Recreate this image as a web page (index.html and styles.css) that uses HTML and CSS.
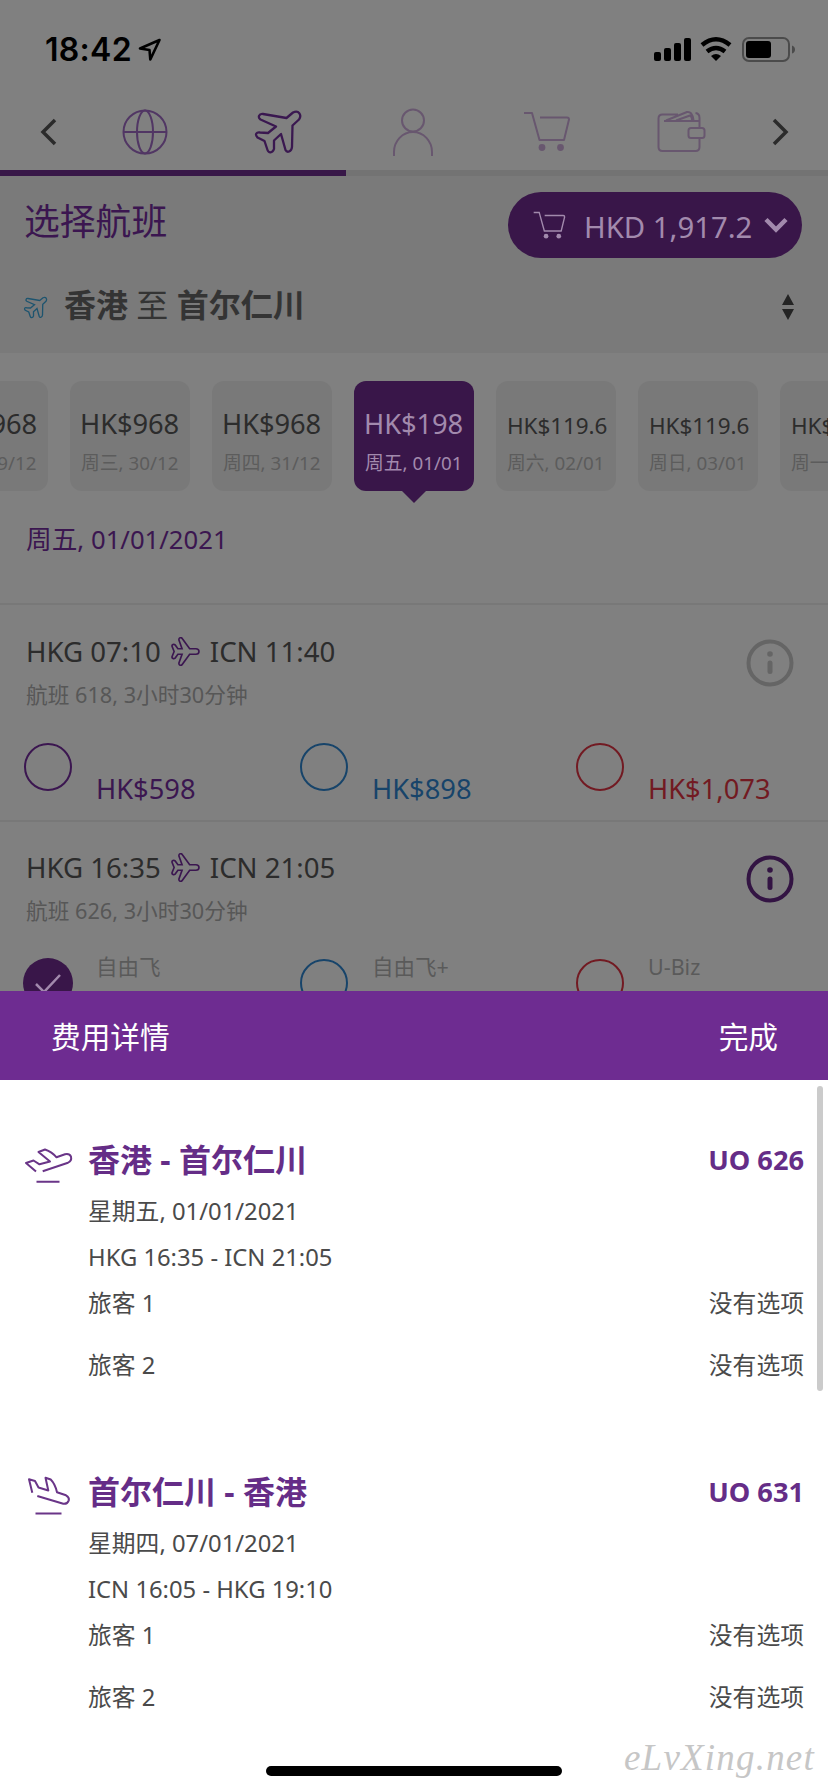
FILE: index.html
```html
<!DOCTYPE html>
<html lang="zh-CN">
<head>
<meta charset="utf-8">
<title>选择航班</title>
<link rel="stylesheet" href="styles.css">
</head>
<body>
<svg class="defs" width="0" height="0">
  <symbol id="plane" viewBox="2 3 42 42"><path d="M42.500 24c0-2.500-2-4-4.500-4H29L18.500 5.500C17 3 13 3.500 13.500 7.500L18 20h-6L8 14.500c-2-1.500-5-.5-4.500 2L6.500 24 3.500 31.500c-.5 2.500 2.500 3.500 4.500 2l4-5.500h6l-4.500 12.500c-.5 4 3.500 4.500 5 2L29 28h9c2.500 0 4.500-1.500 4.500-4z"/></symbol>
  <symbol id="cart" viewBox="0 0 48 42"><path d="M1 2h8l7.500 27H41l5-20.500Q46 6.500 44 6.500H17"/><circle class="dot" cx="19" cy="36.500" r="3.400"/><circle class="dot" cx="37.500" cy="36.500" r="3.400"/></symbol>
  <symbol id="info" viewBox="0 0 48 48"><circle cx="24" cy="24" r="21.500"/><circle class="dot" cx="24" cy="15" r="2.800"/><path class="stem" d="M24 24v8.500"/></symbol>
</svg>
<main class="page">
  <header class="status">
    <span class="clock">18:42</span>
    <svg class="loc" width="24" height="24" viewBox="0 0 24 24"><path d="M21.500 2 2 10.500l9.500 1.500.8 9.500z"/></svg>
    <svg class="signals" width="144" height="28" viewBox="0 0 144 28">
      <rect x="1" y="16" width="7" height="9" rx="2"/><rect x="11" y="12" width="7" height="13" rx="2"/><rect x="21" y="7" width="7" height="18" rx="2"/><rect x="31" y="2" width="7" height="23" rx="2"/>
      <path class="wifi" d="M49 9q14-11.500 28 0M54 15.500q9-7 18 0"/><path d="M58 20q5-4 10 0l-5 5z"/>
      <rect class="shell" x="90" y="2" width="46" height="23" rx="6"/><rect x="93" y="5" width="25" height="17" rx="3"/><path class="nub" d="M139 9.500q3 1 3 4t-3 4z"/>
    </svg>
  </header>
  <nav class="steps">
    <svg class="chev left" width="20" height="30" viewBox="0 0 20 30"><path d="M17 3 5 15l12 12"/></svg>
    <svg class="step globe" width="48" height="48" viewBox="0 0 48 48"><circle cx="24" cy="24" r="21.500"/><ellipse cx="24" cy="24" rx="8" ry="21.500"/><path d="M2.500 24h43"/></svg>
    <svg class="step active" width="50" height="50" viewBox="0 0 50 50"><path d="M32.500 11 39 5.500c6-3 9 3 6 7L38.500 18.500 38 40c-.5 5-5 6-6.500 3L27 27l-7 6.500V42c-1.500 4.500-5.500 4-6.500 1L10.500 34 3.500 30.500C.5 27 2.500 25 6 25.500l8 .5 8-6.500L6.500 12.500C3.500 10.500 5 6.500 9 7z"/></svg>
    <svg class="step faint" width="48" height="50" viewBox="0 0 48 50"><circle cx="24" cy="13.500" r="11"/><path d="M5 49V45a19 20 0 0 1 38 0v4"/></svg>
    <svg class="step faint" width="48" height="42"><use href="#cart"/></svg>
    <svg class="step faint" width="50" height="46" viewBox="0 0 50 46"><path d="M43.500 18V9q0-4.500-4-5M43.500 28v10q0 4-4 4H6.500Q2.500 42 2.500 38V9.500q0-4 4-4H22M8 12h35M10 11.500 31 3q5-1 6.500 8M20 11.500 34 6.500q2.500 2 2 5"/><rect x="32.500" y="19" width="16" height="10" rx="2.500"/></svg>
    <svg class="chev right" width="20" height="30" viewBox="0 0 20 30"><path d="M3 3l12 12L3 27"/></svg>
  </nav>
  <div class="progress"><div class="done"></div></div>
  <section class="head">
    <div class="headrow">
      <h1>选择航班</h1>
      <div class="pill">
        <svg class="pillcart" width="33" height="29"><use href="#cart"/></svg>
        <span>HKD 1,917.2</span>
        <svg class="pillchev" width="24" height="18" viewBox="0 0 24 18"><path d="M2 3.500 12 13.500l10-10"/></svg>
      </div>
    </div>
    <div class="route">
      <svg class="routeplane" width="26" height="25" viewBox="0 0 50 50"><path d="M32.500 11 39 5.500c6-3 9 3 6 7L38.500 18.500 38 40c-.5 5-5 6-6.500 3L27 27l-7 6.500V42c-1.500 4.500-5.500 4-6.500 1L10.500 34 3.500 30.500C.5 27 2.500 25 6 25.500l8 .5 8-6.500L6.500 12.500C3.500 10.500 5 6.500 9 7z"/></svg>
      <div class="cities"><b>香港</b> 至 <b>首尔仁川</b></div>
      <svg class="sort" width="12" height="26" viewBox="0 0 12 26"><path d="M6 0l6 11H0zM6 26 0 15h12z"/></svg>
    </div>
  </section>
  <div class="dates">
    <div class="card"><b>HK$968</b><span>周二, 29/12</span></div>
    <div class="card"><b>HK$968</b><span>周三, 30/12</span></div>
    <div class="card"><b>HK$968</b><span>周四, 31/12</span></div>
    <div class="card on"><b>HK$198</b><span>周五, 01/01</span></div>
    <div class="card small"><b>HK$119.6</b><span>周六, 02/01</span></div>
    <div class="card small"><b>HK$119.6</b><span>周日, 03/01</span></div>
    <div class="card small"><b>HK$119.6</b><span>周一, 04/01</span></div>
  </div>
  <h2 class="day">周五, 01/01/2021</h2>
  <article class="flight">
    <div class="ftop">
      <div>
        <div class="times"><span>HKG 07:10</span><svg width="29" height="29"><use href="#plane"/></svg><span>ICN 11:40</span></div>
        <div class="meta">航班 618, 3小时30分钟</div>
      </div>
      <svg class="info" width="48" height="48"><use href="#info"/></svg>
    </div>
    <div class="fares">
      <div class="fare purple"><i></i><div><span></span><b>HK$598</b></div></div>
      <div class="fare blue"><i></i><div><span></span><b>HK$898</b></div></div>
      <div class="fare red"><i></i><div><span></span><b>HK$1,073</b></div></div>
    </div>
  </article>
  <article class="flight">
    <div class="ftop">
      <div>
        <div class="times"><span>HKG 16:35</span><svg width="29" height="29"><use href="#plane"/></svg><span>ICN 21:05</span></div>
        <div class="meta">航班 626, 3小时30分钟</div>
      </div>
      <svg class="info live" width="48" height="48"><use href="#info"/></svg>
    </div>
    <div class="fares">
      <div class="fare purple picked"><i><svg width="50" height="50" viewBox="0 0 50 50"><path d="M13 26l8 8 16-17"/></svg></i><div><span>自由飞</span></div></div>
      <div class="fare blue"><i></i><div><span>自由飞+</span></div></div>
      <div class="fare red"><i></i><div><span>U-Biz</span></div></div>
    </div>
  </article>
</main>
<section class="sheet">
  <header class="bar"><span>费用详情</span><span>完成</span></header>
  <div class="body">
    <div class="leg">
      <svg class="legicon" width="47" height="40" viewBox="0 0 47 40"><path d="M11 26.500 1 18l7.500-2.500 6 3.800L25 16.500 13.500 7l6.500-2.500Q27 7 31.500 12.300L40 9.300q4.500-1 6 2.400 1 4-3 6L17.700 26.300M11.500 36.700h23"/></svg>
      <div class="lines">
        <div class="row title"><span>香港 - 首尔仁川</span><span>UO 626</span></div>
        <div class="row">星期五, 01/01/2021</div>
        <div class="row">HKG 16:35 - ICN 21:05</div>
        <div class="row"><span>旅客 1</span><span>没有选项</span></div>
        <div class="row second"><span>旅客 2</span><span>没有选项</span></div>
      </div>
    </div>
    <div class="leg">
      <svg class="legicon" width="47" height="40" viewBox="0 0 47 40"><path d="M7.300 15.800 4 2.300l6 1.700 3.500 6.500 9.800 3L20.500.7l5.200 1.800q4.500 4.500 6.300 12.800l9 3q3.500 2 2.800 5-1.500 4-5.500 3.500L12.300 19M10.500 36.500h26"/></svg>
      <div class="lines">
        <div class="row title"><span>首尔仁川 - 香港</span><span>UO 631</span></div>
        <div class="row">星期四, 07/01/2021</div>
        <div class="row">ICN 16:05 - HKG 19:10</div>
        <div class="row"><span>旅客 1</span><span>没有选项</span></div>
        <div class="row second"><span>旅客 2</span><span>没有选项</span></div>
      </div>
    </div>
  </div>
  <div class="scroll"></div>
  <div class="home"></div>
  <div class="mark">eLvXing.net</div>
</section>
</body>
</html>
```
FILE: styles.css
```css
* { box-sizing: border-box; }
body { margin: 0; width: 828px; height: 1792px; overflow: hidden; background: #fff; font-family: "Noto Sans", "Noto Sans CJK SC", sans-serif; }
h1, h2 { margin: 0; font-weight: 400; }
b, i { font-weight: 400; font-style: normal; }
svg { display: block; flex: none; fill: none; overflow: visible; }
.defs { position: absolute; }
.page { height: 991px; overflow: hidden; background: #808080; color: #2c2c2c; }

.status { height: 98px; padding: 2px 31px 0 45px; display: flex; align-items: center; }
.clock { font: 600 32px/40px Inter, sans-serif; color: #000; width: 93px; letter-spacing: .3px; }
.loc { stroke: #000; stroke-width: 2.6; stroke-linejoin: round; }
.signals { margin-left: auto; fill: #000; }
.wifi { fill: none; stroke: #000; stroke-width: 4.5; }
.shell { fill: none; stroke: #4b4b4b; stroke-width: 2; }
.nub { fill: #4b4b4b; }

.steps { height: 72px; padding-bottom: 5px; display: grid; grid-template-columns: 78px repeat(5, 134px) 80px; align-items: center; justify-items: center; }
.chev { stroke: #2b2b2b; stroke-width: 3.5; }
.chev.left { margin-left: 18px; }
.chev.right { margin-right: 15px; }
.step { stroke: #513664; stroke-width: 2; stroke-linejoin: round; }
.step.active { stroke: #3a1850; stroke-width: 2.3; }
.step.faint { stroke: #68576f; --dot: #68576f; }
.dot { fill: var(--dot, none); stroke: none; }
.progress { height: 6px; background: #737373; }
.done { width: 346px; height: 6px; background: #381848; }

.head { height: 177px; background: #7a7a7a; padding: 16px 26px 0 24px; }
.headrow { display: flex; justify-content: space-between; height: 66px; }
h1 { font-size: 35.8px; line-height: 58px; color: #3b1650; }
.pill { width: 294px; height: 66px; border-radius: 33px; background: #391649; display: flex; align-items: center; padding-left: 25px; color: #a28aad; font-size: 29.300px; }
.pill span { margin: 3px 0 0 18px; width: 168px; white-space: nowrap; }
.pillcart { stroke: #a28aad; stroke-width: 2; --dot: #a28aad; }
.pillchev { stroke: #a28aad; stroke-width: 4.5; margin-left: 12px; }
.route { height: 48px; margin-top: 23px; display: flex; align-items: center; padding-right: 8px; }
.routeplane { stroke: #1d546f; stroke-width: 2.6; margin: 5px 0 0 -1px; }
.cities { margin-left: 15px; font-size: 32px; line-height: 48px; white-space: pre; flex: 1; color: #343434; }
.cities b { font-weight: 700; }
.sort { fill: #242424; margin-top: 4px; }

.dates { display: flex; gap: 22px; width: 974px; margin: 28px 0 0 -72px; }
.card { position: relative; width: 120px; height: 110px; flex: none; border-radius: 12px; background: #797979; padding: 23px 0 0 10px; white-space: nowrap; }
.card b { display: block; font-size: 27.300px; line-height: 40px; letter-spacing: -.1px; }
.card.small { padding-left: 11px; }
.card.small b { font-size: 22.5px; padding-top: 3px; line-height: 37px; }
.card span { display: block; font-size: 18.8px; line-height: 38px; color: #5c5c5c; padding-left: 1px; }
.card.small span { padding-left: 0; }
.card.on { background: #391649; color: #a28aad; }
.card.on span { color: #a28aad; }
.card.on::after { content: ""; position: absolute; left: 47px; top: 109px; border: 13px solid transparent; border-bottom: 0; border-top-color: #391649; }
.day { font-size: 25.7px; line-height: 40px; margin: 29px 0 0 26px; height: 83px; color: #3b1650; }

.flight { height: 217px; border-top: 2px solid #787878; padding: 26px 0 0 26px; }
.flight + .flight { padding-top: 25px; }
.ftop { display: flex; justify-content: space-between; padding-right: 34px; height: 112px; }
.times { display: flex; align-items: center; height: 40px; font-size: 27.600px; }
.times svg { stroke: #3b1650; stroke-width: 2.4; margin: 0 10px 0 10px; }
.times span { white-space: nowrap; }
.meta { font-size: 21.7px; line-height: 44px; margin-top: 2px; color: #575757; white-space: nowrap; }
.info { margin-top: 8px; stroke: #656565; stroke-width: 4; --dot: #656565; }
.info.live { stroke: #331443; --dot: #331443; }
.stem { stroke-width: 5; stroke-linecap: round; }
.fares { display: grid; grid-template-columns: 276px 276px 1fr; margin-left: -2px; }
.fare { display: flex; gap: 24px; }
.fare i { width: 48px; height: 48px; border: 2px solid; border-radius: 50%; flex: none; }
.fare span { display: block; height: 30px; margin-top: -7px; font-size: 21.5px; line-height: 30px; color: #5a5a5a; }
.fare b { display: block; font-size: 27.300px; line-height: 40px; margin-top: 3px; }
.purple { color: #3b1650; }
.blue { color: #17446a; }
.red { color: #721a22; }
.picked { gap: 23px; margin-left: -1px; }
.picked i { background: #391649; border: 0; width: 50px; height: 50px; margin-top: -1px; }
.picked i svg { stroke: #a28aad; stroke-width: 2.5; }

.sheet { position: relative; height: 801px; background: #fff; color: #4a4a4a; }
.bar { height: 89px; background: #6e2c91; color: #fff; display: flex; justify-content: space-between; align-items: center; font-size: 29.7px; padding: 0 50px 0 51px; }
.body { padding: 52px 24px 0 25px; }
.leg { display: flex; height: 332px; }
.legicon { stroke: #6a3588; stroke-width: 2; stroke-linejoin: round; margin-top: 13px; }
.lines { margin-left: 16px; flex: 1; font-size: 23.800px; }
.row { display: flex; justify-content: space-between; height: 46px; line-height: 46px; white-space: pre; }
.row.title { height: 56px; line-height: 55px; color: #652d87; font-weight: 700; font-size: 32px; }
.title span:last-child { font-size: 27.200px; line-height: 56px; }
.second { margin-top: 16px; }
.scroll { position: absolute; right: 5px; top: 95px; width: 6px; height: 305px; border-radius: 3px; background: #cbcbcb; }
.home { position: absolute; left: 266px; bottom: 16px; width: 296px; height: 10px; border-radius: 5px; background: #000; }
.mark { position: absolute; left: 624px; bottom: 12px; font: italic 37px/44px "Liberation Serif", serif; color: #c6c6c6; letter-spacing: 1.2px; }
```
